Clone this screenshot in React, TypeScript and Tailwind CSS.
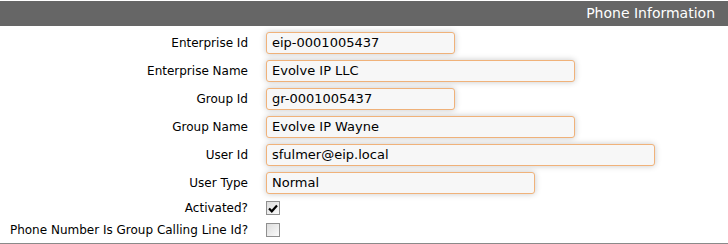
import React from 'react';

type Field = { label: string; value?: string; width?: string; checked?: boolean };

const FIELDS: Field[] = [
  { label: 'Enterprise Id', value: 'eip-0001005437', width: 'w-[189px]' },
  { label: 'Enterprise Name', value: 'Evolve IP LLC', width: 'w-[309px]' },
  { label: 'Group Id', value: 'gr-0001005437', width: 'w-[189px]' },
  { label: 'Group Name', value: 'Evolve IP Wayne', width: 'w-[309px]' },
  { label: 'User Id', value: 'sfulmer@eip.local', width: 'w-[389px]' },
  { label: 'User Type', value: 'Normal', width: 'w-[269px]' },
];

function Checkbox({ checked }: { checked: boolean }) {
  return (
    <span className="flex h-[14px] w-[14px] items-center justify-center border border-[#8f8f8f] bg-gradient-to-br from-[#dcdcdc] to-[#fbfbfb]">
      {checked ? (
        <svg width="10" height="9" viewBox="0 0 10 9" aria-hidden>
          <path d="M1 4.5 L3.8 7.3 L9 1.6" fill="none" stroke="#000" strokeWidth="2.2" />
        </svg>
      ) : null}
    </span>
  );
}

export default function App() {
  return (
    <div className="h-[244px] w-[728px] bg-white pt-px font-['DejaVu_Sans',sans-serif] text-[12px] text-black">
      <div className="flex h-[25px] items-center justify-end bg-[#666666] pr-[13px] text-[14px] text-white">
        Phone Information
      </div>
      <div className="grid grid-cols-[248px_1fr] gap-x-[18px] border-b-2 border-[#8a8a8a] pt-[3px] pb-[2px]">
        {FIELDS.map((f) => (
          <React.Fragment key={f.label}>
            <div className="flex h-[28px] items-center justify-end">{f.label}</div>
            <div className="flex h-[28px] items-center">
              <div
                className={`${f.width} flex h-[22px] items-center rounded-[3px] border border-[#f0b27a] bg-[#f7f7f7] pl-[5px] text-[13px] shadow-[0_0_6px_rgba(0,0,0,0.22)]`}
              >
                {f.value}
              </div>
            </div>
          </React.Fragment>
        ))}
        <div className="flex h-[22px] items-center justify-end">Activated?</div>
        <div className="flex h-[22px] items-center">
          <Checkbox checked />
        </div>
        <div className="flex h-[22px] items-center justify-end">Phone Number Is Group Calling Line Id?</div>
        <div className="flex h-[22px] items-center">
          <Checkbox checked={false} />
        </div>
      </div>
    </div>
  );
}
